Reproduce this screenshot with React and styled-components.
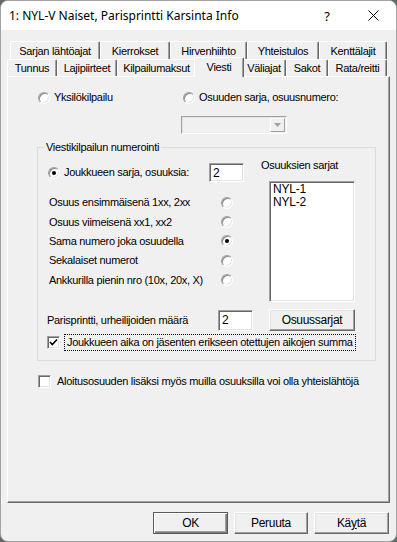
import React from "react";
import styled, { createGlobalStyle } from "styled-components";

const GlobalStyle = createGlobalStyle`
  html, body {
    margin: 0;
    padding: 0;
    background: #5f6b63;
  }
  body {
    font-family: "Liberation Sans", Arial, sans-serif;
    font-size: 11px;
    letter-spacing: -0.3px;
    color: #000;
  }
`;

const Window = styled.div`
  width: 397px;
  height: 542px;
  box-sizing: border-box;
  display: flex;
  flex-direction: column;
  background: #f0f0f0;
  border: 1px solid #a3a3a3;
  border-radius: 8px;
  overflow: hidden;
`;

const TitleBar = styled.div`
  height: 29px;
  flex: none;
  display: flex;
  align-items: center;
  background: #fff;
  padding-left: 8px;
  font-family: "Noto Sans", "Open Sans", sans-serif;
  font-size: 12px;
  letter-spacing: 0;
`;

const Title = styled.span`
  flex: 1;
`;

const CaptionButton = styled.span`
  width: 46px;
  height: 29px;
  display: flex;
  align-items: center;
  justify-content: center;
  font-size: 13px;
`;

const Body = styled.div`
  flex: 1;
  display: flex;
  flex-direction: column;
  padding: 11px 6px 0 6px;
`;

const TabRow = styled.div`
  display: flex;
  height: ${(p) => p.h}px;
  margin-left: ${(p) => p.indent || 0}px;
`;

const Tab = styled.div`
  box-sizing: border-box;
  width: ${(p) => (p.selected ? p.w + 4 : p.w)}px;
  flex: none;
  display: flex;
  align-items: center;
  justify-content: center;
  background: #f0f0f0;
  border-top: 1px solid #fff;
  border-left: 1px solid #fff;
  border-right: 1px solid #696969;
  box-shadow: inset -1px 0 0 #a0a0a0;
  border-radius: 2px 2px 0 0;
  white-space: nowrap;
  ${(p) =>
    p.selected &&
    `
    margin: -2px -2px -1px -2px;
    padding-bottom: 2px;
    position: relative;
    z-index: 2;
  `}
`;

const Panel = styled.div`
  box-sizing: border-box;
  height: 427px;
  flex: none;
  display: flex;
  flex-direction: column;
  align-items: flex-start;
  padding: 14px 0 0 30px;
  border-top: 1px solid #fff;
  border-left: 1px solid #fff;
  border-right: 1px solid #696969;
  border-bottom: 1px solid #696969;
  box-shadow: inset -1px -1px 0 #a0a0a0;
`;

const Line = styled.div`
  display: flex;
  align-items: center;
  line-height: 13px;
`;

const ChoiceRow = styled.div`
  display: flex;
  height: 13px;
`;

const Choice = styled.label`
  display: flex;
  align-items: center;
  gap: 4px;
  width: ${(p) => (p.w ? `${p.w}px` : "auto")};
  line-height: 13px;
  white-space: nowrap;
`;

const Radio = styled.span`
  width: 12px;
  height: 12px;
  flex: none;
  box-sizing: border-box;
  border-radius: 50%;
  border: 1px solid;
  border-color: #a0a0a0 #fff #fff #a0a0a0;
  background: #fff;
  box-shadow: inset 1px 1px 0 #8a8a8a, inset -1px -1px 0 #e3e3e3;
  display: flex;
  align-items: center;
  justify-content: center;
  &::after {
    content: "";
    width: 4px;
    height: 4px;
    border-radius: 50%;
    background: ${(p) => (p.checked ? "#000" : "transparent")};
  }
`;

const CheckBox = styled.span`
  width: 13px;
  height: 13px;
  flex: none;
  box-sizing: border-box;
  border: 1px solid;
  border-color: #a0a0a0 #fff #fff #a0a0a0;
  background: #fff;
  box-shadow: inset 1px 1px 0 #696969, inset -1px -1px 0 #e3e3e3;
  display: flex;
  align-items: center;
  justify-content: center;
`;

const Combo = styled.div`
  box-sizing: border-box;
  width: 106px;
  height: 18px;
  margin: 12px 0 0 143px;
  display: flex;
  justify-content: flex-end;
  background: #f0f0f0;
  border: 1px solid;
  border-color: #a0a0a0 #fff #fff #a0a0a0;
  box-shadow: inset 1px 1px 0 #e3e3e3;
  padding: 1px;
`;

const ComboArrow = styled.span`
  width: 15px;
  box-sizing: border-box;
  border: 1px solid;
  border-color: #fff #a0a0a0 #a0a0a0 #fff;
  background: #f0f0f0;
  display: flex;
  align-items: center;
  justify-content: center;
`;

const Group = styled.fieldset`
  box-sizing: border-box;
  width: 339px;
  margin: 7px 0 0 -1px;
  padding: 0;
  border: 1px solid #dcdcdc;
  border-radius: 0;
`;

const Legend = styled.legend`
  margin-left: 6px;
  padding: 0 2px;
  line-height: 13px;
`;

const GroupBody = styled.div`
  padding: 5px 0 9px 9px;
  display: flex;
  flex-direction: column;
`;

const TopSection = styled.div`
  display: flex;
`;

const LeftCol = styled.div`
  width: 214px;
  display: flex;
  flex-direction: column;
  padding-top: 4px;
`;

const RightCol = styled.div`
  display: flex;
  flex-direction: column;
`;

const SeriesRow = styled.div`
  width: 197px;
  height: 19px;
  display: flex;
  align-items: center;
  justify-content: space-between;
  padding-left: 1px;
  box-sizing: border-box;
  margin-bottom: 11px;
`;

const OptionRow = styled.div`
  width: 186px;
  height: 19.4px;
  display: flex;
  align-items: center;
  justify-content: space-between;
  padding-left: 2px;
  box-sizing: border-box;
`;

const TextBox = styled.div`
  box-sizing: border-box;
  width: ${(p) => p.w}px;
  height: ${(p) => p.h}px;
  background: #fff;
  border: 1px solid;
  border-color: #a0a0a0 #fff #fff #a0a0a0;
  box-shadow: inset 1px 1px 0 #696969, inset -1px -1px 0 #e3e3e3;
  padding: 2px 0 0 3px;
  font-size: 12px;
  line-height: 14px;
`;

const ListLabel = styled.div`
  line-height: 13px;
`;

const ListBox = styled.div`
  box-sizing: border-box;
  width: 86px;
  height: 121px;
  margin: 9px 0 0 8px;
  background: #fff;
  border: 1px solid;
  border-color: #a0a0a0 #fff #fff #a0a0a0;
  box-shadow: inset 1px 1px 0 #696969, inset -1px -1px 0 #e3e3e3;
  padding: 1px 0 0 3px;
  font-size: 12px;
  line-height: 13px;
  letter-spacing: -0.2px;
`;

const PairRow = styled.div`
  display: flex;
  align-items: center;
  height: 22px;
  margin-top: 7px;
`;

const PairLabel = styled.span`
  width: 171px;
  line-height: 13px;
`;

const Button = styled.div`
  box-sizing: border-box;
  width: ${(p) => p.w}px;
  height: ${(p) => p.h || 22}px;
  margin-left: ${(p) => p.ml || 0}px;
  display: flex;
  align-items: center;
  justify-content: center;
  background: #f0f0f0;
  border: 1px solid;
  border-color: ${(p) =>
    p.primary ? "#5a5a5a" : "#fff #696969 #696969 #fff"};
  box-shadow: ${(p) =>
    p.primary
      ? "inset 1px 1px 0 #fff, inset -1px -1px 0 #7a7a7a, inset -2px -2px 0 #a0a0a0"
      : "inset -1px -1px 0 #a0a0a0, inset 1px 1px 0 #e3e3e3"};
  font-size: 12px;
  letter-spacing: -0.3px;
`;

const CheckRow = styled.div`
  display: flex;
  align-items: center;
  gap: 4px;
  height: 17px;
  margin-top: ${(p) => p.mt || 0}px;
`;

const FocusText = styled.span`
  border: 1px dotted #000;
  padding: 1px 2px 1px 2px;
  line-height: 13px;
`;

const PlainText = styled.span`
  padding-left: 2px;
  line-height: 13px;
`;

const ButtonBar = styled.div`
  display: flex;
  justify-content: flex-end;
  gap: 6px;
  margin: 9px 1px 0 0;
`;

const Under = styled.span`
  text-decoration: underline;
`;

const tabsBack = [
  ["Sarjan lähtöajat", 90],
  ["Kierrokset", 70],
  ["Hirvenhiihto", 77],
  ["Yhteistulos", 72],
  ["Kenttälajit", 68],
];

const tabsFront = [
  ["Tunnus", 50],
  ["Lajipiirteet", 60],
  ["Kilpailumaksut", 79],
  ["Viesti", 46],
  ["Väliajat", 44],
  ["Sakot", 42],
  ["Rata/reitti", 59],
];

const options = [
  ["Osuus ensimmäisenä 1xx, 2xx", false],
  ["Osuus viimeisenä xx1, xx2", false],
  ["Sama numero joka osuudella", true],
  ["Sekalaiset numerot", false],
  ["Ankkurilla pienin nro (10x, 20x, X)", false],
];

const Check = () => (
  <svg width="9" height="9" viewBox="0 0 9 9">
    <polyline
      points="1,4 3.3,6.5 8,1.5"
      fill="none"
      stroke="#000"
      strokeWidth="1.6"
    />
  </svg>
);

export default function App() {
  return (
    <>
      <GlobalStyle />
      <Window>
        <TitleBar>
          <Title>1: NYL-V Naiset, Parisprintti Karsinta Info</Title>
          <CaptionButton>?</CaptionButton>
          <CaptionButton>
            <svg width="11" height="11" viewBox="0 0 11 11">
              <path d="M0.5 0.5 L10.5 10.5 M10.5 0.5 L0.5 10.5" stroke="#000" strokeWidth="1" />
            </svg>
          </CaptionButton>
        </TitleBar>
        <Body>
          <TabRow h={18} indent={3}>
            {tabsBack.map(([t, w]) => (
              <Tab key={t} w={w}>
                {t}
              </Tab>
            ))}
          </TabRow>
          <TabRow h={17}>
            {tabsFront.map(([t, w]) => (
              <Tab key={t} w={w} selected={t === "Viesti"}>
                {t}
              </Tab>
            ))}
          </TabRow>
          <Panel>
            <ChoiceRow>
              <Choice w={145}>
                <Radio />
                Yksilökilpailu
              </Choice>
              <Choice>
                <Radio />
                Osuuden sarja, osuusnumero:
              </Choice>
            </ChoiceRow>
            <Combo>
              <ComboArrow>
                <svg width="7" height="4" viewBox="0 0 7 4">
                  <path d="M0 0 L7 0 L3.5 4 Z" fill="#a0a0a0" />
                </svg>
              </ComboArrow>
            </Combo>
            <Group>
              <Legend>Viestikilpailun numerointi</Legend>
              <GroupBody>
                <TopSection>
                  <LeftCol>
                    <SeriesRow>
                      <Choice>
                        <Radio checked />
                        Joukkueen sarja, osuuksia:
                      </Choice>
                      <TextBox w={35} h={19}>2</TextBox>
                    </SeriesRow>
                    {options.map(([t, c]) => (
                      <OptionRow key={t}>
                        <Line>{t}</Line>
                        <Radio checked={c} />
                      </OptionRow>
                    ))}
                  </LeftCol>
                  <RightCol>
                    <ListLabel>Osuuksien sarjat</ListLabel>
                    <ListBox>
                      <div>NYL-1</div>
                      <div>NYL-2</div>
                    </ListBox>
                  </RightCol>
                </TopSection>
                <PairRow>
                  <PairLabel>Parisprintti, urheilijoiden määrä</PairLabel>
                  <TextBox w={35} h={21}>2</TextBox>
                  <Button w={86} ml={16}>Osuussarjat</Button>
                </PairRow>
                <CheckRow mt={3}>
                  <CheckBox>
                    <Check />
                  </CheckBox>
                  <FocusText>
                    Joukkueen aika on jäsenten erikseen otettujen aikojen summa
                  </FocusText>
                </CheckRow>
              </GroupBody>
            </Group>
            <CheckRow mt={12}>
              <CheckBox />
              <PlainText>
                Aloitusosuuden lisäksi myös muilla osuuksilla voi olla yhteislähtöjä
              </PlainText>
            </CheckRow>
          </Panel>
          <ButtonBar>
            <Button w={75} primary>
              OK
            </Button>
            <Button w={74}>Peruuta</Button>
            <Button w={75}>
              Kä<Under>y</Under>tä
            </Button>
          </ButtonBar>
        </Body>
      </Window>
    </>
  );
}
